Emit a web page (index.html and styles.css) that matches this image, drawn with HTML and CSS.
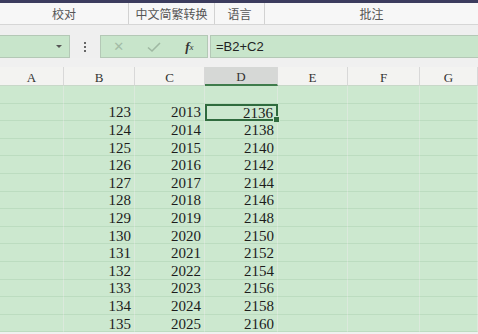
FILE: index.html
```html
<!DOCTYPE html>
<html>
<head>
<meta charset="utf-8">
<link rel="stylesheet" href="styles.css">
</head>
<body>
<div class="topbar"></div>
<div class="ribbon">
  <div class="grp g1">校对</div>
  <div class="grp g2">中文简繁转换</div>
  <div class="grp g3">语言</div>
  <div class="grp g4">批注</div>
</div>
<div class="gap"></div>
<div class="fbar">
  <div class="namebox"><span class="caret"></span></div>
  <div class="dots"><i></i><i></i><i></i></div>
  <div class="btns">
    <span class="btn x">✕</span>
    <span class="btn ok"><svg width="14" height="12" viewBox="0 0 14 12"><path d="M1 6.5 L5 10 L13 2" fill="none" stroke="#9fb8a2" stroke-width="1.6"/></svg></span>
    <span class="btn fx"><i>f</i><sub>x</sub></span>
  </div>
  <div class="input">=B2+C2</div>
</div>
<div class="gap2"></div>
<div class="sheet">
  <div class="hd">A</div><div class="hd">B</div><div class="hd">C</div><div class="hd sel">D</div><div class="hd">E</div><div class="hd">F</div><div class="hd">G</div>
  <div class="c"></div><div class="c"></div><div class="c"></div><div class="c"></div><div class="c"></div><div class="c"></div><div class="c"></div>
  <div class="c"></div><div class="c n">123</div><div class="c n">2013</div><div class="c n active">2136</div><div class="c"></div><div class="c"></div><div class="c"></div>
  <div class="c"></div><div class="c n">124</div><div class="c n">2014</div><div class="c n">2138</div><div class="c"></div><div class="c"></div><div class="c"></div>
  <div class="c"></div><div class="c n">125</div><div class="c n">2015</div><div class="c n">2140</div><div class="c"></div><div class="c"></div><div class="c"></div>
  <div class="c"></div><div class="c n">126</div><div class="c n">2016</div><div class="c n">2142</div><div class="c"></div><div class="c"></div><div class="c"></div>
  <div class="c"></div><div class="c n">127</div><div class="c n">2017</div><div class="c n">2144</div><div class="c"></div><div class="c"></div><div class="c"></div>
  <div class="c"></div><div class="c n">128</div><div class="c n">2018</div><div class="c n">2146</div><div class="c"></div><div class="c"></div><div class="c"></div>
  <div class="c"></div><div class="c n">129</div><div class="c n">2019</div><div class="c n">2148</div><div class="c"></div><div class="c"></div><div class="c"></div>
  <div class="c"></div><div class="c n">130</div><div class="c n">2020</div><div class="c n">2150</div><div class="c"></div><div class="c"></div><div class="c"></div>
  <div class="c"></div><div class="c n">131</div><div class="c n">2021</div><div class="c n">2152</div><div class="c"></div><div class="c"></div><div class="c"></div>
  <div class="c"></div><div class="c n">132</div><div class="c n">2022</div><div class="c n">2154</div><div class="c"></div><div class="c"></div><div class="c"></div>
  <div class="c"></div><div class="c n">133</div><div class="c n">2023</div><div class="c n">2156</div><div class="c"></div><div class="c"></div><div class="c"></div>
  <div class="c"></div><div class="c n">134</div><div class="c n">2024</div><div class="c n">2158</div><div class="c"></div><div class="c"></div><div class="c"></div>
  <div class="c"></div><div class="c n">135</div><div class="c n">2025</div><div class="c n">2160</div><div class="c"></div><div class="c"></div><div class="c"></div>
</div>
</body>
</html>
```
FILE: styles.css
```css
* { box-sizing: border-box; }
html, body { margin: 0; padding: 0; }
body {
  width: 478px;
  height: 334px;
  overflow: hidden;
  background: #f0f0f0;
  font-family: "Noto Sans CJK SC", "Liberation Sans", sans-serif;
}
.topbar { height: 3px; background: #3c3c5e; }
.ribbon {
  height: 22px;
  display: flex;
  background: #f7f7f7;
  border-bottom: 1px solid #d6d6d6;
}
.grp {
  display: flex;
  align-items: center;
  justify-content: center;
  font-size: 12px;
  color: #555;
  border-right: 1px solid #d2d2d2;
}
.g1 { width: 129px; }
.g2 { width: 86px; }
.g3 { width: 50px; }
.g4 { flex: 1; border-right: none; }
.gap { height: 10px; background: #efefef; }
.fbar {
  height: 23px;
  display: flex;
  background: #efefef;
}
.namebox {
  width: 70px;
  background: #c8e5cb;
  border: 1px solid #b4c8b6;
  border-left: none;
  display: flex;
  align-items: center;
  justify-content: flex-end;
  padding-right: 7px;
}
.caret {
  width: 0; height: 0;
  border-left: 3px solid transparent;
  border-right: 3px solid transparent;
  border-top: 3px solid #555;
}
.dots {
  width: 30px;
  display: flex;
  flex-direction: column;
  align-items: center;
  justify-content: center;
  gap: 2px;
}
.dots i {
  width: 2px; height: 2px;
  background: #666;
  display: block;
}
.btns {
  width: 108px;
  display: flex;
  align-items: center;
  background: #c8e5cb;
  border: 1px solid #b4c8b6;
}
.btn {
  flex: 1;
  display: flex;
  align-items: center;
  justify-content: center;
}
.x { color: #a3bba6; font-size: 13px; font-family: "DejaVu Sans", sans-serif; }
.fx { color: #333; font-family: "Liberation Serif", serif; font-size: 13px; font-style: italic; }
.fx i { font-weight: bold; }
.fx sub { font-size: 9px; vertical-align: -2px; }
.input {
  flex: 1;
  margin-left: 2px;
  background: #c8e5cb;
  border: 1px solid #b4c8b6;
  border-right: none;
  display: flex;
  align-items: center;
  padding-left: 5px;
  font-family: "Liberation Sans", sans-serif;
  font-size: 13px;
  color: #222;
}
.gap2 { height: 9px; background: #f0f0f0; }
.sheet {
  display: grid;
  grid-template-columns: 64px 71px 70px 73px 70px 72px 1fr;
  grid-template-rows: 19px repeat(14, 17.6px);
  background: #cce8cf;
}
.hd {
  background: #f3f3f1;
  border-right: 1px solid #d8d8d8;
  border-bottom: 1px solid #c8d8c9;
  display: flex;
  align-items: center;
  justify-content: center;
  padding-top: 3px;
  font-family: "Liberation Serif", serif;
  font-size: 13px;
  color: #333;
}
.hd.sel {
  background: #d6d8d6;
  border-bottom: 2px solid #3f7c4c;
}
.c {
  border-right: 1px solid #dbe9dc;
  border-bottom: 1px solid #bcdcc0;
  font-family: "Liberation Serif", serif;
  font-size: 15px;
  color: #1c1c1c;
  display: flex;
  align-items: center;
  justify-content: flex-end;
  padding-right: 3px;
  padding-top: 2px;
  line-height: 1;
}
.c.active {
  border: 2px solid #2f6b3e;
  position: relative;
}
.c.active::after {
  content: "";
  position: absolute;
  right: -4px;
  bottom: -4px;
  width: 5px;
  height: 5px;
  background: #2f6b3e;
  border: 1px solid #cce8cf;
}
```
